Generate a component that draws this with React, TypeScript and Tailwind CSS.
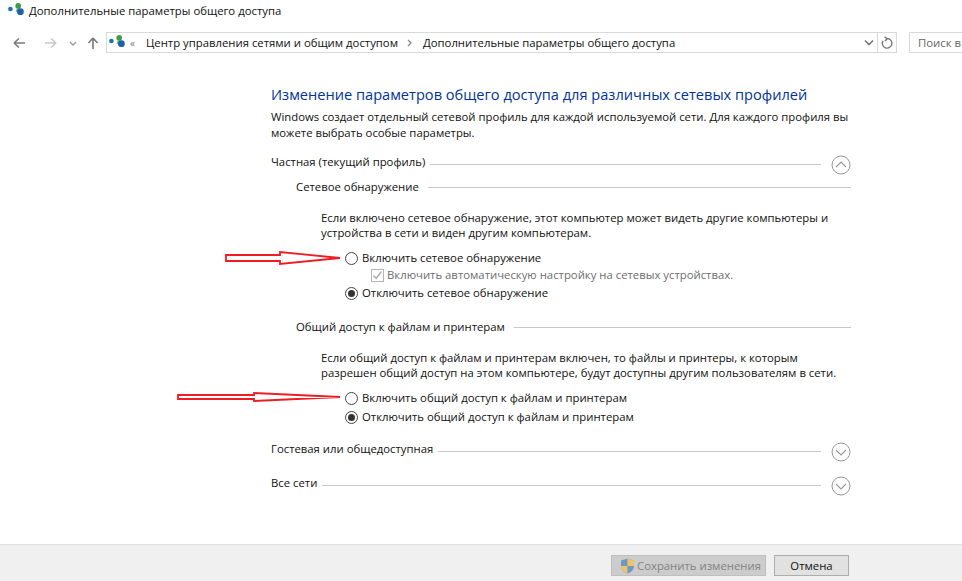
import React from "react";

const font = "[font-family:'Open_Sans','Noto_Sans',sans-serif]";

function NetIcon() {
  return (
    <svg width="16" height="16" viewBox="0 0 16 16" className="shrink-0">
      <circle cx="2.4" cy="6" r="2.3" fill="#1f6fb5" />
      <path d="M9 5 L7.5 9 L11 9 Z" fill="#7db77f" />
      <circle cx="10.2" cy="2.9" r="2.8" fill="#3f9b48" />
      <circle cx="12.4" cy="8.7" r="3.4" fill="#1c63ad" />
    </svg>
  );
}

function Radio({ checked, label, className = "" }: { checked?: boolean; label: string; className?: string }) {
  return (
    <div className={`flex items-center h-[16px] ${className}`}>
      <span className="w-[13px] h-[13px] rounded-full border border-[#444] flex items-center justify-center bg-white shrink-0 ml-[24px] mr-[4px]">
        {checked && <span className="w-[7px] h-[7px] rounded-full bg-[#333]" />}
      </span>
      <span className="text-[#111]">{label}</span>
    </div>
  );
}

function Chevron({ up }: { up?: boolean }) {
  return (
    <svg width="20" height="20" viewBox="0 0 20 20" className="shrink-0">
      <circle cx="10" cy="10" r="9" fill="none" stroke="#969696" />
      <path d={up ? "M5 12 L10 7 L15 12" : "M5 8 L10 13 L15 8"} fill="none" stroke="#969696" strokeWidth="1.1" />
    </svg>
  );
}

function Section({ title, up, className = "" }: { title: string; up?: boolean; className?: string }) {
  return (
    <div className={`flex items-center h-[20px] ${className}`}>
      <span className="text-[#111] whitespace-nowrap mb-[6px]">{title}</span>
      <span className="flex-1 h-px bg-[#c8c8c8] ml-[5px] mr-[10px] mb-[2px]" />
      <Chevron up={up} />
    </div>
  );
}

function Group({ title, className = "" }: { title: string; className?: string }) {
  return (
    <div className={`flex items-center h-[16px] ml-[25px] ${className}`}>
      <span className="text-[#111] whitespace-nowrap">{title}</span>
      <span className="flex-1 h-px bg-[#c8c8c8] ml-[9px] mt-[1px]" />
    </div>
  );
}

function Arrow({ x, y, w, headAt, body, head }: { x: number; y: number; w: number; headAt: number; body: number; head: number }) {
  const mid = 8;
  return (
    <svg className="absolute" style={{ left: x, top: y }} width={w} height={16} viewBox={`0 0 ${w} 16`}>
      <path
        d={`M1 ${mid - body} H${headAt} V${mid - head} L${w - 1} ${mid} L${headAt} ${mid + head} V${mid + body} H1 Z`}
        fill="#fff"
        stroke="#f01c24"
        strokeWidth="1.8"
      />
    </svg>
  );
}

export default function App() {
  return (
    <div className={`relative w-[962px] h-[581px] overflow-hidden bg-white flex flex-col text-[11.33px] leading-[16px] ${font}`}>
      <div className="flex items-center h-[22px] pl-[8px] gap-[5px] text-[#111]">
        <NetIcon />
        <span className="whitespace-nowrap">Дополнительные параметры общего доступа</span>
      </div>

      <div className="flex items-center h-[21px] mt-[10px] pl-[13px] whitespace-nowrap">
        <svg width="88" height="16" viewBox="0 0 88 16" className="shrink-0 text-[#777]">
          <path d="M1 8 H12 M1 8 L6 3.5 M1 8 L6 12.5" fill="none" stroke="#7a7a7a" strokeWidth="1.6" />
          <path d="M43 8 H32 M43 8 L38 3.5 M43 8 L38 12.5" fill="none" stroke="#c9c9c9" strokeWidth="1.6" />
          <path d="M57 7 L60 10 L63 7" fill="none" stroke="#9a9a9a" strokeWidth="1.3" />
          <path d="M80 14 V3 M80 3 L75.5 8 M80 3 L84.5 8" fill="none" stroke="#7a7a7a" strokeWidth="1.6" />
        </svg>
        <div className="flex items-center h-[21px] w-[791px] ml-[5px] border border-[#d9d9d9] text-[#111] shrink-0">
          <span className="ml-[2px]"><NetIcon /></span>
          <span className="ml-[5px] text-[#777] text-[10px]">«</span>
          <span className="ml-[11px]">Центр управления сетями и общим доступом</span>
          <svg width="6" height="8" viewBox="0 0 6 8" className="ml-[9px] mr-[10px]"><path d="M1 1 L4 4 L1 7" fill="none" stroke="#888" strokeWidth="1.2" /></svg>
          <span>Дополнительные параметры общего доступа</span>
          <span className="flex-1" />
          <svg width="10" height="8" viewBox="0 0 10 8" className="mr-[3px]"><path d="M1 1.5 L5 5.5 L9 1.5" fill="none" stroke="#777" strokeWidth="1.6" /></svg>
          <span className="w-px h-full bg-[#d9d9d9]" />
          <svg width="16" height="16" viewBox="0 0 16 16" className="mx-[1px]"><path d="M8 3.5 A4.8 4.8 0 1 1 4 5.8 M5.5 1.8 L8.3 3.6 L6 6" fill="none" stroke="#777" strokeWidth="1.4" /></svg>
        </div>
        <div className="flex items-center h-[21px] w-[60px] ml-[12px] pl-[8px] border border-[#d9d9d9] text-[#666] shrink-0">Поиск в</div>
      </div>

      <div className="flex-1 pl-[271px] pr-[111px] whitespace-nowrap">
        <h1 className="text-[#003399] font-normal text-[14.6px] leading-[20px] mt-[31px]">
          Изменение параметров общего доступа для различных сетевых профилей
        </h1>
        <p className="mt-[5px] text-[#111]">
          Windows создает отдельный сетевой профиль для каждой используемой сети. Для каждого профиля вы
          <br />
          можете выбрать особые параметры.
        </p>
        <Section title="Частная (текущий профиль)" up className="mt-[14px]" />
        <Group title="Сетевое обнаружение" className="mt-[4px]" />
        <p className="ml-[50px] mt-[15px] leading-[15px] text-[#111]">
          Если включено сетевое обнаружение, этот компьютер может видеть другие компьютеры и
          <br />
          устройства в сети и виден другим компьютерам.
        </p>
        <Radio label="Включить сетевое обнаружение" className="ml-[50px] mt-[10px]" />
        <div className="flex items-center h-[16px] ml-[100px] mt-[1px] text-[#6d6d6d]">
          <span className="w-[13px] h-[13px] border border-[#b5b5b5] mr-[3px] flex items-center justify-center">
            <svg width="11" height="11" viewBox="0 0 11 11"><path d="M1.5 5.5 L4.2 8.5 L9.5 1.5" fill="none" stroke="#a8a8a8" strokeWidth="1.3" /></svg>
          </span>
          Включить автоматическую настройку на сетевых устройствах.
        </div>
        <Radio checked label="Отключить сетевое обнаружение" className="ml-[50px] mt-[2px]" />
        <Group title="Общий доступ к файлам и принтерам" className="mt-[18px]" />
        <p className="ml-[50px] mt-[15px] leading-[15px] text-[#111]">
          Если общий доступ к файлам и принтерам включен, то файлы и принтеры, к которым
          <br />
          разрешен общий доступ на этом компьютере, будут доступны другим пользователям в сети.
        </p>
        <Radio label="Включить общий доступ к файлам и принтерам" className="ml-[50px] mt-[10px]" />
        <Radio checked label="Отключить общий доступ к файлам и принтерам" className="ml-[50px] mt-[3px]" />
        <Section title="Гостевая или общедоступная" className="mt-[17px]" />
        <Section title="Все сети" className="mt-[14px]" />
      </div>

      <div className="h-[37px] bg-[#f0f0f0] border-t border-[#dfdfdf] flex items-start justify-end pr-[113px] pt-[10px] gap-[8px] shrink-0">
        <div className="w-[155px] h-[21px] bg-[#cccccc] border border-[#bfbfbf] flex items-center pl-[8px] text-[#838383] whitespace-nowrap">
          <svg width="15" height="16" viewBox="0 0 15 16" className="shrink-0 mr-[2px]">
            <path d="M7.5 0.5 L14 2.5 V8 C14 12 10.5 14.5 7.5 15.5 C4.5 14.5 1 12 1 8 V2.5 Z" fill="#6f97c6" />
            <path d="M7.5 0.5 L14 2.5 V8 H7.5 Z" fill="#eac668" />
            <path d="M7.5 8 V15.5 C4.5 14.5 1 12 1 8 Z" fill="#eac668" />
          </svg>
          Сохранить изменения
        </div>
        <div className="w-[75px] h-[21px] bg-[#e1e1e1] border border-[#adadad] flex items-center justify-center text-[#111]">Отмена</div>
      </div>

      <Arrow x={225} y={250} w={116} headAt={55} body={3} head={6} />
      <Arrow x={177} y={389} w={164} headAt={77} body={2} head={4} />
    </div>
  );
}
